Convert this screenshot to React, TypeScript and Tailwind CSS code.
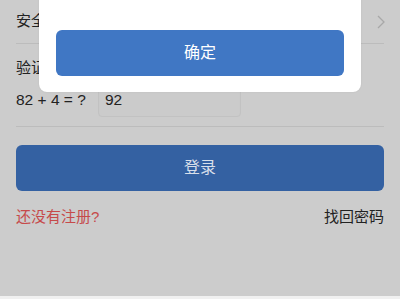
export default function App() {
  return (
    <div
      className="relative w-[400px] h-[299px] overflow-hidden bg-[#f0f0f0] text-[#222]"
      style={{ fontFamily: '"Liberation Sans", "Noto Sans CJK SC", sans-serif' }}
    >
      <div className="h-[296px] bg-[#cccccc] px-4">
        <div className="flex h-[44px] items-center justify-between border-b border-[#bcbcbc] text-[15px]">
          <span>安全问题</span>
          <svg width="10" height="16" viewBox="0 0 10 16" className="mr-[-2px]">
            <path d="M2 2l6 6-6 6" fill="none" stroke="#a8a8a8" strokeWidth="1.3" />
          </svg>
        </div>
        <div className="h-[83px] border-b border-[#bcbcbc]">
          <div className="pt-[13px] text-[15px] leading-[22px]">验证码</div>
          <div className="mt-[4px] flex items-center">
            <span className="w-[82px] text-[15.5px]">82 + 4 = ?</span>
            <div className="flex h-[34px] w-[143px] items-center rounded-[4px] border border-[#c2c2c2] bg-[#cbcbcb] px-[6px] text-[15.5px] shadow-[inset_0_1px_1px_rgba(0,0,0,0.06)]">
              92
            </div>
          </div>
        </div>
        <button className="mt-[18px] flex h-[46px] w-full items-center justify-center rounded-[6px] bg-[#3461a2] text-[16px] text-[#d8dfea]">
          登录
        </button>
        <div className="mt-[15px] flex items-center justify-between text-[15px]">
          <span className="text-[#c64a4a]">还没有注册?</span>
          <span className="text-[#222]">找回密码</span>
        </div>
      </div>
      <div className="absolute left-[39px] top-[-20px] h-[112px] w-[322px] rounded-[8px] bg-white shadow-[0_0_2px_rgba(0,0,0,0.08)]">
        <div className="mx-[17px] mt-[50px] flex h-[46px] items-center justify-center rounded-[6px] bg-[#4077c4] text-[16px] text-white">
          确定
        </div>
      </div>
    </div>
  )
}
